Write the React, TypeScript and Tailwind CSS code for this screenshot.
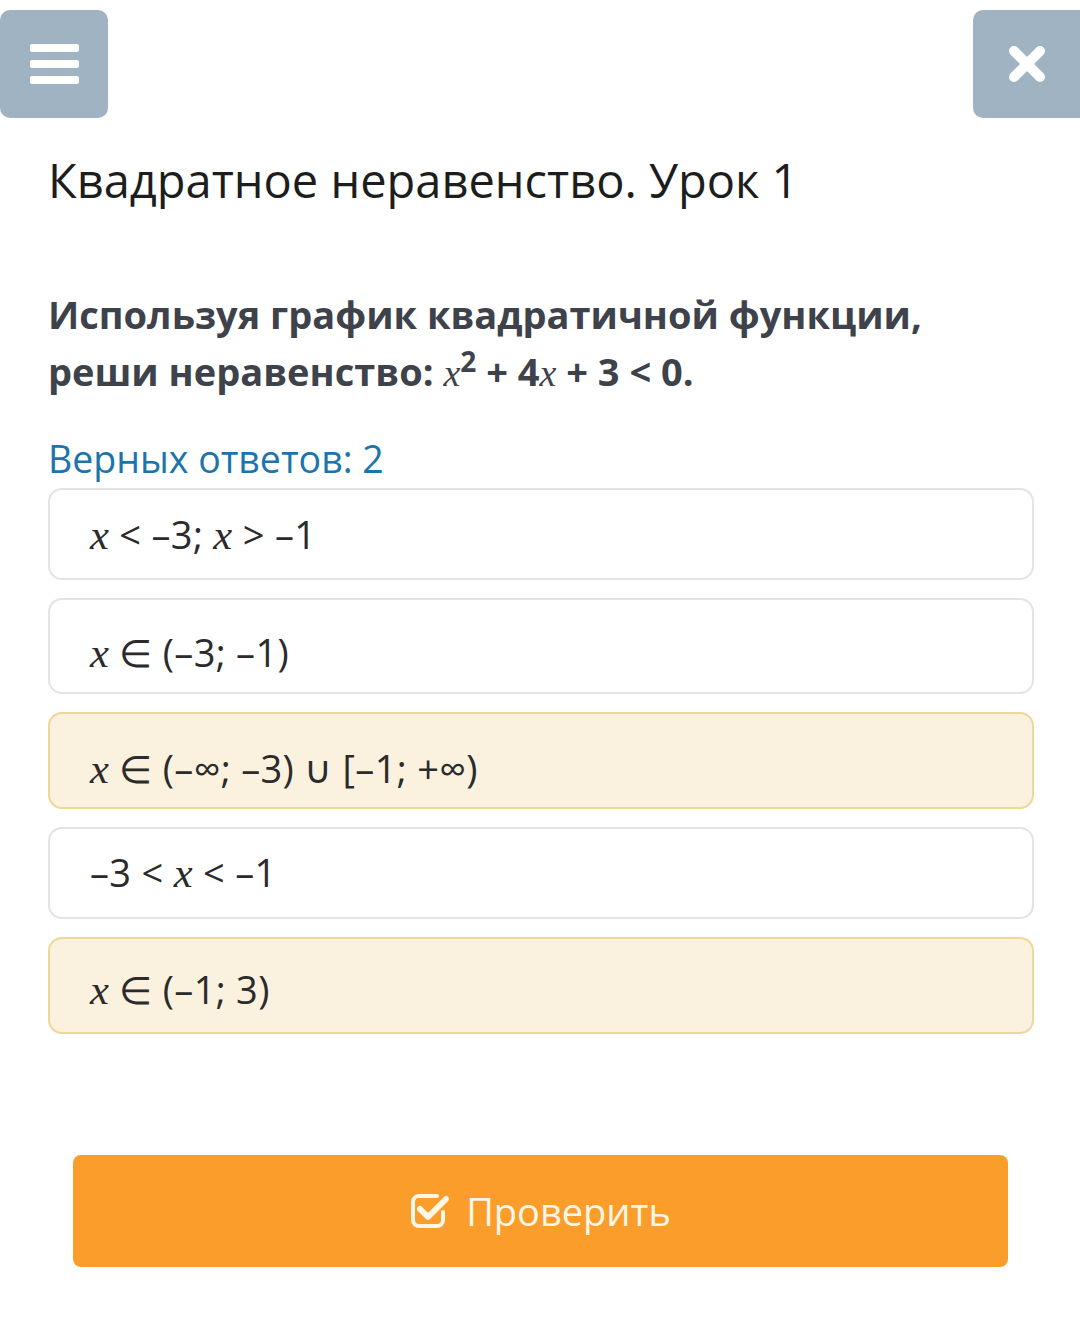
import React from "react";

const sans = "font-['Open_Sans',_'Noto_Sans',sans-serif]";

function X() {
  return <span className="font-['Liberation_Serif',serif] italic text-[1.12em]">x</span>;
}

type Option = {
  key: string;
  content: React.ReactNode;
  picked: boolean;
  h: string;
  pt: string;
};

const options: Option[] = [
  {
    key: "a",
    picked: false,
    h: "h-[92px]",
    pt: "pt-[24px]",
    content: (
      <>
        <X /> &lt; –3; <X /> &gt; –1
      </>
    ),
  },
  {
    key: "b",
    picked: false,
    h: "h-[96px]",
    pt: "pt-[32px]",
    content: (
      <>
        <X /> ∈ (–3; –1)
      </>
    ),
  },
  {
    key: "c",
    picked: true,
    h: "h-[97px]",
    pt: "pt-[34px]",
    content: (
      <>
        <X /> ∈ (–∞; –3) ∪ [–1; +∞)
      </>
    ),
  },
  {
    key: "d",
    picked: false,
    h: "h-[92px]",
    pt: "pt-[23px]",
    content: (
      <>
        –3 &lt; <X /> &lt; –1
      </>
    ),
  },
  {
    key: "e",
    picked: true,
    h: "h-[97px]",
    pt: "pt-[30px]",
    content: (
      <>
        <X /> ∈ (–1; 3)
      </>
    ),
  },
];

function CheckIcon() {
  return (
    <svg width="40" height="38" viewBox="0 0 40 38" fill="none">
      <path
        d="M27 4H9a6 6 0 0 0-6 6v18a6 6 0 0 0 6 6h18a6 6 0 0 0 6-6v-8"
        stroke="currentColor"
        strokeWidth="4"
        strokeLinecap="round"
      />
      <path
        d="M10 17l8 8L36 7"
        stroke="currentColor"
        strokeWidth="6"
        strokeLinecap="round"
        strokeLinejoin="round"
      />
    </svg>
  );
}

export default function App() {
  return (
    <main className={`min-h-[1326px] w-[1080px] bg-white ${sans}`}>
      <header className="flex items-start justify-between pt-[10px]">
        <button className="flex h-[108px] w-[108px] flex-col items-center justify-center gap-[8px] rounded-[10px] bg-[#9fb3c2]">
          <span className="h-[8px] w-[49px] rounded-[2px] bg-white" />
          <span className="h-[8px] w-[49px] rounded-[2px] bg-white" />
          <span className="h-[8px] w-[49px] rounded-[2px] bg-white" />
        </button>
        <button className="flex h-[108px] w-[107px] items-center justify-center rounded-l-[10px] bg-[#9fb3c2]">
          <svg width="40" height="40" viewBox="0 0 40 40">
            <path d="M7 7l26 26M33 7L7 33" stroke="white" strokeWidth="10" strokeLinecap="round" />
          </svg>
        </button>
      </header>

      <section className="pl-[48px] pr-[46px]">
        <h1 className="mt-[30px] text-[47px] leading-[64px] text-[#1d1d1d]">
          Квадратное неравенство. Урок 1
        </h1>

        <p className="mt-[74px] text-[38px] font-bold leading-[57px] text-[#3d424b]">
          Используя график квадратичной функции,
          <br />
          реши неравенство: <span className="font-['Liberation_Serif',serif] font-normal italic">x</span>
          <sup className="-top-[14px] text-[28px]">2</sup> + 4
          <span className="font-['Liberation_Serif',serif] font-normal italic">x</span> + 3 &lt; 0.
        </p>

        <p className="mt-[32px] text-[37.5px] leading-[50px] text-[#1b75ab]">Верных ответов: 2</p>

        <ul className="mt-[4px] flex flex-col gap-[18px]">
          {options.map((o) => (
            <li
              key={o.key}
              className={`${o.h} ${o.pt} rounded-[14px] border-2 pl-[40px] text-[38px] leading-none tracking-[0.3px] text-[#2b2b2b] ${
                o.picked ? "border-[#efd796] bg-[#faf1df]" : "border-[#e4e4e4] bg-white"
              }`}
            >
              {o.content}
            </li>
          ))}
        </ul>
      </section>

      <div className="pl-[73px] pr-[72px] pt-[121px]">
        <button className="flex h-[112px] w-full items-center justify-center gap-[16px] rounded-[8px] bg-[#fb9d2b] text-[38px] text-[#fff6e6]">
          <CheckIcon />
          <span>Проверить</span>
        </button>
      </div>
    </main>
  );
}
